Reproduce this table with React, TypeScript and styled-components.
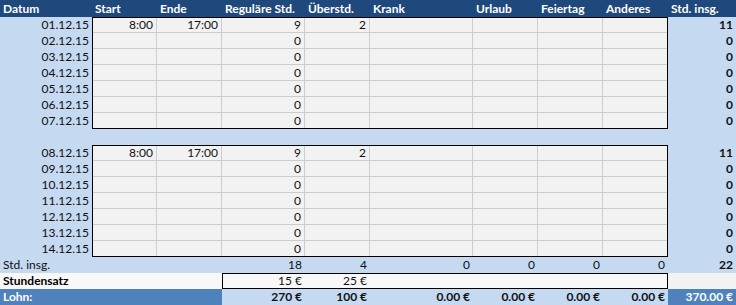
import React from "react";
import styled, { createGlobalStyle } from "styled-components";

const GlobalStyle = createGlobalStyle`
  html, body { margin: 0; padding: 0; background: #ffffff; }
  body { font-family: Lato, "Open Sans", "Liberation Sans", sans-serif; font-size: 12px; color: #111; }
  * { box-sizing: border-box; }
`;

const NAVY = "#1f497d";
const MID = "#4f81bd";
const LIGHT = "#c5d9f1";
const CELL = "#f2f2f2";
const GRID = "#cdcdcd";

const COLS = "92px 65px 65px 83px 65px 103px 65px 65px 65px 68px";
const DATA_COLS = "65px 65px 83px 65px 103px 65px 65px 65px";

const Sheet = styled.div`
  width: 736px;
  display: flex;
  flex-direction: column;
`;

const HeaderRow = styled.div`
  display: grid;
  grid-template-columns: ${COLS};
  height: 17px;
  background: ${NAVY};
`;

const HeaderCell = styled.div`
  color: #ffffff;
  font-weight: 700;
  padding-left: 3px;
  line-height: 17px;
  white-space: nowrap;
`;

const Week = styled.div`
  display: flex;
`;

const SideColumn = styled.div<{ $w: number }>`
  width: ${(p) => p.$w}px;
  background: ${LIGHT};
  display: flex;
  flex-direction: column;
`;

const SideCell = styled.div<{ $bold?: boolean }>`
  height: 16px;
  line-height: 16px;
  padding-right: 3px;
  text-align: right;
  font-weight: ${(p) => (p.$bold ? 700 : 400)};
`;

const DataGrid = styled.div`
  display: grid;
  grid-template-columns: ${DATA_COLS};
  grid-auto-rows: 16px;
  background: ${CELL};
  outline: 1px solid #000;
  outline-offset: -1px;
`;

const DataCell = styled.div`
  border-right: 1px solid ${GRID};
  border-bottom: 1px solid ${GRID};
  text-align: right;
  padding-right: 3px;
  line-height: 16px;
`;

const Band = styled.div`
  height: 16px;
  background: ${LIGHT};
`;

const SumRow = styled.div`
  display: grid;
  grid-template-columns: ${COLS};
  height: 16px;
  background: ${LIGHT};
`;

const Cell = styled.div<{ $left?: boolean; $bold?: boolean; $span?: number }>`
  grid-column: span ${(p) => p.$span ?? 1};
  line-height: 16px;
  text-align: ${(p) => (p.$left ? "left" : "right")};
  padding: ${(p) => (p.$left ? "0 0 0 3px" : "0 3px 0 0")};
  font-weight: ${(p) => (p.$bold ? 700 : 400)};
  white-space: nowrap;
`;

const SplitRow = styled.div`
  display: flex;
  height: 16px;
`;

const LabelBlock = styled.div<{ $dark?: boolean }>`
  width: 222px;
  background: ${(p) => (p.$dark ? MID : "#f8f8f8")};
  color: ${(p) => (p.$dark ? "#ffffff" : "#000000")};
  font-weight: 700;
  padding-left: 3px;
  line-height: 16px;
`;

const ValueBlock = styled.div<{ $boxed?: boolean }>`
  width: 446px;
  display: grid;
  grid-template-columns: 83px 65px 103px 65px 65px 65px;
  background: ${(p) => (p.$boxed ? "#f8f8f8" : LIGHT)};
  outline: ${(p) => (p.$boxed ? "1px solid #000" : "none")};
  outline-offset: -1px;
`;

const TotalBlock = styled.div<{ $dark?: boolean }>`
  width: 68px;
  background: ${(p) => (p.$dark ? MID : CELL)};
  color: ${(p) => (p.$dark ? "#ffffff" : "#000")};
  font-weight: 700;
  text-align: right;
  padding-right: 3px;
  line-height: 16px;
`;

const headers = ["Datum", "Start", "Ende", "Reguläre Std.", "Überstd.", "Krank", "Urlaub", "Feiertag", "Anderes", "Std. insg."];

type Day = { date: string; start?: string; end?: string; reg: string; over?: string; total: string };

const week1: Day[] = [
  { date: "01.12.15", start: "8:00", end: "17:00", reg: "9", over: "2", total: "11" },
  { date: "02.12.15", reg: "0", total: "0" },
  { date: "03.12.15", reg: "0", total: "0" },
  { date: "04.12.15", reg: "0", total: "0" },
  { date: "05.12.15", reg: "0", total: "0" },
  { date: "06.12.15", reg: "0", total: "0" },
  { date: "07.12.15", reg: "0", total: "0" },
];

const week2: Day[] = [
  { date: "08.12.15", start: "8:00", end: "17:00", reg: "9", over: "2", total: "11" },
  { date: "09.12.15", reg: "0", total: "0" },
  { date: "10.12.15", reg: "0", total: "0" },
  { date: "11.12.15", reg: "0", total: "0" },
  { date: "12.12.15", reg: "0", total: "0" },
  { date: "13.12.15", reg: "0", total: "0" },
  { date: "14.12.15", reg: "0", total: "0" },
];

function WeekBlock({ days }: { days: Day[] }) {
  return (
    <Week>
      <SideColumn $w={92}>
        {days.map((d) => (
          <SideCell key={d.date}>{d.date}</SideCell>
        ))}
      </SideColumn>
      <DataGrid>
        {days.map((d) => (
          <React.Fragment key={d.date}>
            <DataCell>{d.start ?? ""}</DataCell>
            <DataCell>{d.end ?? ""}</DataCell>
            <DataCell>{d.reg}</DataCell>
            <DataCell>{d.over ?? ""}</DataCell>
            <DataCell />
            <DataCell />
            <DataCell />
            <DataCell />
          </React.Fragment>
        ))}
      </DataGrid>
      <SideColumn $w={68}>
        {days.map((d) => (
          <SideCell key={d.date} $bold>
            {d.total}
          </SideCell>
        ))}
      </SideColumn>
    </Week>
  );
}

export default function App() {
  return (
    <>
      <GlobalStyle />
      <Sheet>
        <HeaderRow>
          {headers.map((h) => (
            <HeaderCell key={h}>{h}</HeaderCell>
          ))}
        </HeaderRow>
        <WeekBlock days={week1} />
        <Band />
        <WeekBlock days={week2} />
        <SumRow>
          <Cell $left $span={3}>Std. insg.</Cell>
          <Cell>18</Cell>
          <Cell>4</Cell>
          <Cell>0</Cell>
          <Cell>0</Cell>
          <Cell>0</Cell>
          <Cell>0</Cell>
          <Cell $bold>22</Cell>
        </SumRow>
        <SplitRow>
          <LabelBlock>Stundensatz</LabelBlock>
          <ValueBlock $boxed>
            <Cell>15 €</Cell>
            <Cell>25 €</Cell>
          </ValueBlock>
          <TotalBlock />
        </SplitRow>
        <SplitRow>
          <LabelBlock $dark>Lohn:</LabelBlock>
          <ValueBlock>
            <Cell $bold>270 €</Cell>
            <Cell $bold>100 €</Cell>
            <Cell $bold>0.00 €</Cell>
            <Cell $bold>0.00 €</Cell>
            <Cell $bold>0.00 €</Cell>
            <Cell $bold>0.00 €</Cell>
          </ValueBlock>
          <TotalBlock $dark>370.00 €</TotalBlock>
        </SplitRow>
      </Sheet>
    </>
  );
}
